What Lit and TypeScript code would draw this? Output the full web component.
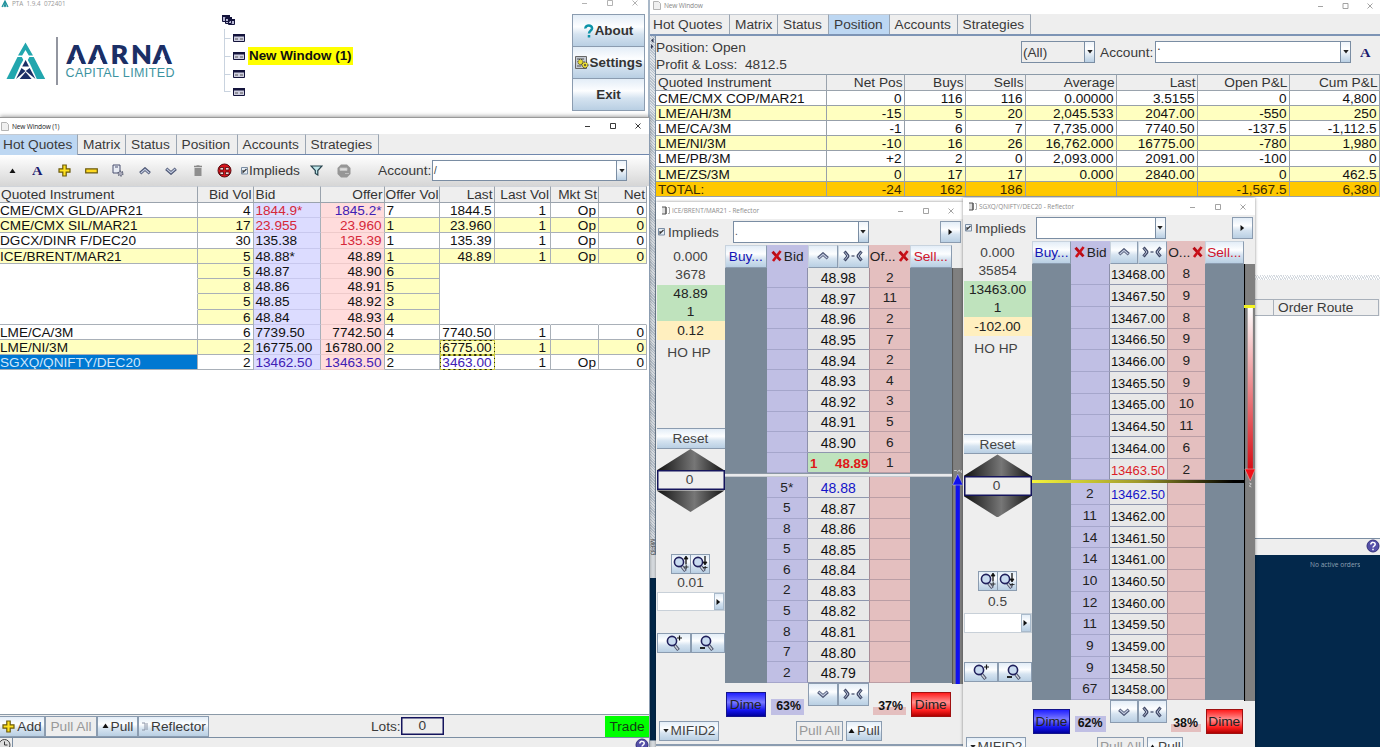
import { LitElement, html, svg, css, nothing } from "lit";
import { customElement, property } from "lit/decorators.js";
import { classMap } from "lit/directives/class-map.js";
import { styleMap } from "lit/directives/style-map.js";

const shared = css`
  * { box-sizing: border-box; }
  svg { display: block; flex: none; }
  .btn {
    display: flex; align-items: center; justify-content: center; flex: none;
    border: 1px solid #8b9cb0; white-space: nowrap; overflow: hidden;
    background: linear-gradient(#e3edf7 0%, #fdfeff 38%, #d5e3f0 62%, #b9cfe3 100%);
  }
  .title {
    display: flex; align-items: center; background: #fff; flex: none;
    font: 6.600px "Open Sans", "Noto Sans", sans-serif; color: #333; white-space: nowrap;
  }
  .title .grow { flex: 1; }
  .combo { display: flex; flex: none; border: 1px solid #7a8da3; background: #fff; }
  .combo .text { flex: 1; padding-left: 1px; }
  .combo .drop {
    width: 10px; display: flex; align-items: center; justify-content: center;
    border-left: 1px solid #7a8da3; background: linear-gradient(#eef4fa, #fff 35%, #b9cfe3);
  }
`;

const down = html`<svg width="6" height="4" viewBox="0 0 6 4"><path d="M.3 0h5.400L3 3.400z" fill="#222"/></svg>`;
const up = html`<svg width="7" height="6" viewBox="0 0 7 6"><path d="M3.500 .5L6.500 5h-6z" fill="#111"/></svg>`;
const right = html`<svg width="5" height="8" viewBox="0 0 5 8"><path d="M.5 1v6L4.200 4z" fill="#111"/></svg>`;
const check = html`<svg width="7" height="8" viewBox="0 0 7 8"><path d="M.5.5h6v6.500h-6z" fill="#e6eef6" stroke="#7a8da3"/><path d="M2 3v2.400L5.500 2" fill="none" stroke="#333" stroke-width="1.100"/></svg>`;
const cross = html`<svg width="11" height="12" viewBox="0 0 11 12"><path d="M1.500 1.800L9.500 10.400" stroke="#b80a14" stroke-width="2.800"/><path d="M9.600 1L2 11" stroke="#cc1018" stroke-width="2.600"/></svg>`;
const chevron = (dir: "up" | "down") => html`<svg width="12" height="8" viewBox="0 0 12 8">
  <g transform=${dir === "up" ? "" : "translate(0 8) scale(1 -1)"}>
    <path d="M1.200 6.200L6 2l4.800 4.200" fill="none" stroke="#4d5775" stroke-width="3.200"/>
    <path d="M1.800 6L6 2.300 10.200 6" fill="none" stroke="#c3cbe0" stroke-width="1.200"/>
  </g></svg>`;
const center = html`<svg width="20" height="12" viewBox="0 0 20 12">
  <path d="M1.500 1.500L5.200 6 1.500 10.500M18.500 1.500L14.800 6l3.700 4.500" fill="none" stroke="#3d4664" stroke-width="3" stroke-linejoin="bevel"/>
  <path d="M2 2.300L5 6l-3 3.700M18 2.300L15 6l3 3.700" fill="none" stroke="#c3cbe0" stroke-width="1"/>
  <path d="M8.500 6h3" stroke="#3d4664" stroke-width="1.200"/></svg>`;
const magnifier = (mark: string) => html`<svg width="18" height="18" viewBox="0 0 18 18">
  <path d="M9.500 11l4 5" stroke="#4a5068" stroke-width="3.400"/><path d="M9.800 11.500l3.200 4" stroke="#d0d4dc" stroke-width="1.300"/>
  <circle cx="7" cy="7" r="4.600" fill="#c9dbf0" stroke="#20205c" stroke-width="1.600"/>
  ${mark === "+" ? svg`<path d="M14.500 1.500v5M12 4h5" stroke="#111" stroke-width="1.200"/>` : nothing}
  ${mark === "-" ? svg`<path d="M1 14h5" stroke="#111" stroke-width="1.800"/>` : nothing}
  ${mark === "u" ? svg`<path d="M14 2.500v7" stroke="#111" stroke-width="1.300"/><path d="M12 4L14 1l2 3zM12 12h4.500M14.200 10v4" fill="#111" stroke="#111" stroke-width=".8"/>` : nothing}
  ${mark === "d" ? svg`<path d="M14 1v7" stroke="#111" stroke-width="1.300"/><path d="M12 7L14 10l2-3zM12 12.500h4.500M14.200 11v3" fill="#111" stroke="#111" stroke-width=".8"/>` : nothing}
</svg>`;
const help = html`<svg width="14" height="14" viewBox="0 0 14 14"><circle cx="7" cy="7" r="6" fill="#5550a8" stroke="#33307c"/>
  <path d="M4.800 5.400C4.800 2.600 9.400 2.800 9.200 5.400C9.100 6.900 7 6.700 7 8.600M7 9.800v1.500" fill="none" stroke="#fff" stroke-width="1.500"/></svg>`;
const page = html`<svg width="8" height="9" viewBox="0 0 8 9"><path d="M.5.5h5l2 2v6h-7z" fill="#f0f0f0" stroke="#b4b4b4"/></svg>`;
const plus = html`<svg width="13" height="13" viewBox="0 0 13 13"><path d="M4.800 1h3.400v3.800H12v3.400H8.200V12H4.800V8.200H1V4.800h3.800z" fill="#ffe21f" stroke="#6b5a0c" stroke-width="1.200"/></svg>`;
const letterA = html`<svg width="12" height="15" viewBox="0 0 12 15"><text x="0" y="12" font-family="Liberation Serif, serif" font-weight="bold" font-size="13.500" textLength="10.500" lengthAdjust="spacingAndGlyphs" fill="#1a1a6e">A</text></svg>`;
const winButtons = (c: string, gap: number) => html`<svg width=${gap * 2 + 8} height="10" viewBox="0 0 ${gap * 2 + 8} 10" fill="none" stroke=${c}>
  <path d="M1 5.500h5M${gap + 1.500} 2.500h5v5h-5zM${gap * 2 + 1.500} 2.500l5 5M${gap * 2 + 6.500} 2.500l-5 5" stroke-width=".9"/></svg>`;
const ladderIcon = html`<svg width="9" height="9" viewBox="0 0 9 9"><path d="M1 1h4v7H1M5 1v7" fill="#ddd" stroke="#555"/><path d="M7 1.500h1.500v6H7" fill="none" stroke="#aaa"/></svg>`;

interface Ladder {
  title: string; cols: string; rowHeight: number; firstLow: number;
  stats: string[]; tick: string; ticks: [string, string][]; lows: [string, string][];
  offerLabel: string; buyPct: string; sellPct: string; gaps: number[];
  combo: number[]; priceSize: number; kind: "blue" | "red"; split: number;
}

@customElement("reflector-window")
export class ReflectorWindow extends LitElement {
  @property({ attribute: false }) data!: Ladder;

  static styles = [shared, css`
    :host { display: block; height: 549px; background: #eee; overflow: hidden; font: 13.700px "Liberation Sans", Arial, sans-serif; color: #444; box-shadow: 0 0 3px rgba(0,0,0,.45); }
    .title { height: 17px; padding: 0 8px 0 5px; gap: 2px; color: #8c8c8c; font-size: 6.400px; }
    .toolbar { display: flex; height: 25.500px; padding: 2px 2px 2px 2px; align-items: flex-start; }
    .check { display: flex; align-items: center; gap: 3px; height: 22px; font-size: 13.700px; }
    .combo { height: 21.500px; line-height: 19px; font-size: 10px; }
    .spacer { flex: 1; }
    .play { width: 21px; height: 22px; }
    .main { display: flex; height: 439px; }
    .side { width: 69px; padding: 3px .5px 0; flex: none; text-align: center; font-size: 13.700px; }
    .line { line-height: 18.500px; height: 18.500px; }
    .green { background: #bfe3bd; color: #222; line-height: 18.200px; height: 18.200px; }
    .yellow { background: #ffefbf; color: #222; line-height: 19.600px; height: 19.600px; }
    .ho { line-height: 25px; height: 24px; padding-right: 3px; }
    .reset { height: 20.500px; border-left: 0; border-right: 0; }
    .tri { height: 21.500px; background: linear-gradient(90deg, #111, #777 55%, #111); }
    .tri.up { clip-path: polygon(50% 0, 100% 100%, 0 100%); }
    .tri.down { clip-path: polygon(0 0, 100% 0, 50% 100%); }
    .box { height: 20px; box-shadow: inset 0 0 0 1.500px #14145c; background: #eee; line-height: 20px; padding-right: 2px; }
    .zooms { display: flex; justify-content: center; padding-right: 1px; }
    .zooms .btn { width: 20px; height: 20px; margin-right: -1px; }
    .tickbox { display: flex; height: 19.500px; border: 1px solid #c8d0d8; background: #fff; }
    .tickbox span { flex: 1; }
    .tickbox .btn { width: 10px; border-color: #a9bacb; }
    .pm { display: flex; height: 20px; }
    .pm .btn { flex: 1; }
    .ladder { flex: none; }
    .grid { display: grid; }
    .head { height: 23px; }
    .head > * { display: flex; align-items: center; justify-content: center; gap: 2px; overflow: hidden; white-space: nowrap; }
    .head .btn { border-top-color: #c8d3de; border-left-color: #c8d3de; }
    .head .pair { gap: 0; }
    .bidhead { background: #c0bfe4; color: #222; }
    .offhead { background: #e4bfbf; color: #222; }
    .buy { color: #1414b4; }
    .sell { color: #d0142c; }
    .pair { display: flex; }
    .pair .btn { flex: 1; height: 100%; }
    .slate { background: #7a8998; }
    .bid, .off, .price { display: flex; align-items: center; justify-content: center; color: #222; border-bottom: 1px solid #8f97ae; }
    .bid { background: #c0bfe4; border-bottom-color: #a5a6cb; border-right: 1px solid #8d90ab; }
    .off { background: #e4bfbf; border-bottom-color: #bb9ea5; border-left: 1px solid #a78c96; }
    .price { background: #e8e8e8; color: #111; padding-top: 2px; }
    .price.last { background: #bfe3bd; color: #e01818; font-weight: bold; justify-content: space-between; padding: 1px 0 0 2px; font-size: 13.400px; }
    .price.ask { color: #dc1e28; }
    .price.best { color: #1414c8; }
    .split.blue { height: 4px; background: #e9eaec; border-top: 1px solid #8a96a2; border-bottom: 1px solid #c5cad0; }
    .split.red { height: 3px; background: linear-gradient(90deg, #f4f43c, #a09a2a 50%, #000 95%); }
    .foot { height: 37px; align-items: start; }
    .dime { height: 25px; margin: 9px 1px 0; display: flex; align-items: center; justify-content: center; color: #222; }
    .dime.b { background: linear-gradient(#2020ff, #7a7aff 40%, #1414ee 75%, #00009c); border: 1px solid #14148c; }
    .dime.r { background: linear-gradient(#ff1c1c, #ff9090 40%, #ff2020 75%, #b00000); border: 1px solid #a01010; }
    .pct { margin: 16px 4px 0; height: 16px; line-height: 15px; font-weight: bold; font-size: 12.400px; color: #111; text-align: right; padding-right: 3px; background: #c0bfe4; white-space: nowrap; }
    .pct.s { background: linear-gradient(transparent 8px, #e4bfbf 8px); }
    .foot .pair { height: 23px; }
    .strip { flex: 1; padding-top: 23px; }
    .strip svg { width: 100%; }
    .actions { display: flex; height: 20.500px; padding: 0 0 0 3px; gap: 3px; font-size: 13.700px; }
    .actions .btn { gap: 2px; }
    .off-btn { color: #999; background: #eee; }
    .status { margin-top: 3px; border-top: 2px solid #8b9cb0; height: 12px; }
  `];

  render() {
    const d = this.data;
    const cols = styleMap({ gridTemplateColumns: d.cols });
    const rows = (n: number, h: number) => styleMap({ gridTemplateColumns: d.cols, gridAutoRows: `${h}px`, fontSize: `${n}px` });
    const row = (price: string, bid: string, off: string, kind: string) => html`
      <div class="slate"></div><div class="bid">${bid}</div>
      <div class=${"price " + kind} style=${styleMap({ fontSize: kind === "last" ? "" : d.priceSize + "px" })}>${kind === "last" ? html`<span>1</span>` : nothing}<span>${price}</span></div>
      <div class="off">${off}</div><div class="slate"></div>`;
    const gap = (h: number) => html`<div style=${styleMap({ height: h + "px" })}></div>`;
    return html`
      <div class="title">${ladderIcon}<span>${d.title} - Reflector</span><span class="grow"></span>${winButtons("#999", 25)}</div>
      <div class="toolbar">
        <div class="check">${check}<span>Implieds</span></div>
        <div class="combo" style=${styleMap({ width: d.combo[1] + "px", marginLeft: d.combo[0] + "px" })}><span class="text">${d.kind === "blue" ? "." : ""}</span><span class="drop">${down}</span></div>
        <span class="spacer"></span><div class="btn play">${right}</div>
      </div>
      <div class="main">
        <div class="side">
          <div class="line">0.000</div><div class="line">${d.stats[0]}</div>
          <div class="green">${d.stats[1]}</div><div class="green">1</div>
          <div class="yellow">${d.stats[2]}</div><div class="ho">HO HP</div>
          ${gap(d.gaps[0])}
          <div class="btn reset">Reset</div><div class="tri up"></div><div class="box">0</div><div class="tri down"></div>
          ${gap(d.gaps[1])}
          <div class="zooms"><div class="btn">${magnifier("u")}</div><div class="btn">${magnifier("d")}</div></div>
          <div style=${styleMap({ lineHeight: d.gaps[2] + "px" })}>${d.tick}</div>
          <div class="tickbox"><span></span><div class="btn">${right}</div></div>
          ${gap(d.gaps[3])}
          <div class="pm"><div class="btn">${magnifier("+")}</div><div class="btn">${magnifier("-")}</div></div>
        </div>
        <div class="ladder">
          <div class="grid head" style=${cols}>
            <div class="btn buy">Buy...</div><div class="bidhead">${cross}Bid</div>
            <div class="pair"><div class="btn">${chevron("up")}</div><div class="btn">${center}</div></div>
            <div class="offhead">${d.offerLabel}${cross}</div><div class="btn sell">Sell...</div>
          </div>
          <div class="grid" style=${rows(13.700, d.rowHeight)}>
            ${d.ticks.map(([p, q], i) => row(p, "", q, i === d.ticks.length - 1 ? (d.kind === "blue" ? "last" : "ask") : ""))}
          </div>
          <div class=${"split " + d.kind}></div>
          <div class="grid" style=${rows(13.700, d.firstLow)}>
            ${d.lows.map(([p, q], i) => row(p, q, "", i === 0 ? "best" : ""))}
          </div>
          <div class="grid foot" style=${cols}>
            <div class="dime b">Dime</div><div class="pct">${d.buyPct}</div>
            <div class="pair"><div class="btn">${chevron("down")}</div><div class="btn">${center}</div></div>
            <div class="pct s">${d.sellPct}</div><div class="dime r">Dime</div>
          </div>
        </div>
        <div class="strip">
          ${d.kind === "blue"
            ? html`<svg height="416" viewBox="0 0 11 416" preserveAspectRatio="none"><path d="M0 0h11v416H0z" fill="#808080"/><path d="M.5 0v416" stroke="#555"/><path d="M2 202.500h2.500M5 204l2-2 1 2M9 202v3" stroke="#ddd" stroke-width=".8" fill="none"/><path d="M5.500 216v200" stroke="#1010ee" stroke-width="4"/><path d="M5.500 206l5 11h-10z" fill="#1010ee" stroke="#cfd0e8" stroke-width=".5"/></svg>`
            : html`<svg height="437" viewBox="0 0 11 437" preserveAspectRatio="none"><defs><linearGradient id="g" x2="0" y2="1"><stop stop-color="#fff"/><stop offset="1" stop-color="#d80c14"/></linearGradient></defs>
              <path d="M0 0h11v437H0z" fill="#808080"/><path d="M.5 0v437" stroke="#000"/><path d="M3.500 44h5v162h-5z" fill="url(#g)"/><path d="M0 41h11v3H0z" fill="#f4f420"/><path d="M.8 205h10L6 217z" fill="#f01018" stroke="#e8c8c8" stroke-width=".5"/><path d="M5 219l2 1-2 2 2 1" fill="none" stroke="#ddd" stroke-width=".8"/></svg>`}
        </div>
      </div>
      ${gap(d.split)}
      <div class="actions">
        <div class="btn" style="width:60px">${down}MIFID2</div>
        <div style=${styleMap({ width: d.gaps[4] + "px" })}></div>
        <div class="btn off-btn" style="width:47px">Pull All</div><div class="btn" style="width:36px">${up}Pull</div>
      </div>
      <div class="status"></div>`;
  }
}

const brent: Ladder = {
  title: "ICE/BRENT/MAR21", cols: "41.500px 41.500px 60.500px 41.500px 41.500px", rowHeight: 20.600, firstLow: 20.550,
  stats: ["3678", "48.89", "0.12"], tick: "0.01",
  ticks: [["48.98", "2"], ["48.97", "11"], ["48.96", "2"], ["48.95", "7"], ["48.94", "2"], ["48.93", "4"], ["48.92", "3"], ["48.91", "5"], ["48.90", "6"], ["48.89", "1"]],
  lows: [["48.88", "5*"], ["48.87", "5"], ["48.86", "8"], ["48.85", "5"], ["48.84", "6"], ["48.83", "2"], ["48.82", "5"], ["48.81", "8"], ["48.80", "7"], ["48.79", "2"]],
  offerLabel: "Of...", buyPct: "63%", sellPct: "37%", gaps: [64, 42, 18, 22, 71], combo: [14, 136], priceSize: 14, kind: "blue", split: 37,
};
const nifty: Ladder = {
  title: "SGXQ/QNIFTY/DEC20", cols: "39px 38.500px 57px 38.500px 38.500px", rowHeight: 21.700, firstLow: 21.700,
  stats: ["35854", "13463.00", "-102.00"], tick: "0.5",
  ticks: [["13468.00", "8"], ["13467.50", "9"], ["13467.00", "8"], ["13466.50", "9"], ["13466.00", "9"], ["13465.50", "9"], ["13465.00", "10"], ["13464.50", "11"], ["13464.00", "6"], ["13463.50", "2"]],
  lows: [["13462.50", "2"], ["13462.00", "11"], ["13461.50", "14"], ["13461.00", "14"], ["13460.50", "10"], ["13460.00", "12"], ["13459.50", "11"], ["13459.00", "9"], ["13458.50", "9"], ["13458.00", "67"]],
  offerLabel: "O...", buyPct: "62%", sellPct: "38%", gaps: [73.500, 54, 22, 29, 65], combo: [10, 130], priceSize: 13, kind: "red", split: 57,
};

type Quote = [string, string, string, string, string, string, string, string, string, string];
// instrument, bid vol, bid, offer, offer vol, last, last vol, status, net, flags
const quotes: Quote[] = [
  ["CME/CMX GLD/APR21", "4", "1844.9*", "1845.2*", "7", "1844.5", "1", "Op", "0", "bidred offblue"],
  ["CME/CMX SIL/MAR21", "17", "23.955", "23.960", "1", "23.960", "1", "Op", "0", "odd bidred offred"],
  ["DGCX/DINR F/DEC20", "30", "135.38", "135.39", "1", "135.39", "1", "Op", "0", "offred"],
  ["ICE/BRENT/MAR21", "5", "48.88*", "48.89", "1", "48.89", "1", "Op", "0", "odd"],
  ["", "5", "48.87", "48.90", "6", "", "", "", "", "depth"],
  ["", "8", "48.86", "48.91", "5", "", "", "", "", "depth"],
  ["", "5", "48.85", "48.92", "3", "", "", "", "", "depth"],
  ["", "6", "48.84", "48.93", "4", "", "", "", "", "depth end"],
  ["LME/CA/3M", "6", "7739.50", "7742.50", "4", "7740.50", "1", "", "0", ""],
  ["LME/NI/3M", "2", "16775.00", "16780.00", "2", "6775.00", "1", "", "0", "odd flash"],
  ["SGXQ/QNIFTY/DEC20", "2", "13462.50", "13463.50", "2", "3463.00", "1", "Op", "0", "sel bidblue offblue flash lastblue"],
];
const positions = [
  ["CME/CMX COP/MAR21", "0", "116", "116", "0.00000", "3.5155", "0", "4,800"],
  ["LME/AH/3M", "-15", "5", "20", "2,045.533", "2047.00", "-550", "250"],
  ["LME/CA/3M", "-1", "6", "7", "7,735.000", "7740.50", "-137.5", "-1,112.5"],
  ["LME/NI/3M", "-10", "16", "26", "16,762.000", "16775.00", "-780", "1,980"],
  ["LME/PB/3M", "+2", "2", "0", "2,093.000", "2091.00", "-100", "0"],
  ["LME/ZS/3M", "0", "17", "17", "0.000", "2840.00", "0", "462.5"],
  ["TOTAL:", "-24", "162", "186", "", "", "-1,567.5", "6,380"],
];
const tabNames = ["Hot Quotes", "Matrix", "Status", "Position", "Accounts", "Strategies"];

@customElement("app-root")
export class AppRoot extends LitElement {
  static styles = [shared, css`
    :host { display: block; position: relative; width: 1380px; height: 747px; overflow: hidden; background: #03284b; font: 13.600px "Liberation Sans", Arial, sans-serif; color: #3a3a3a; }
    .win { position: absolute; overflow: hidden; }
    .main { left: 0; top: 0; width: 650px; height: 118px; background: #fff; display: flex; border-right: 2px solid #a9b8c8; }
    .main .left { display: flex; flex-direction: column; width: 222px; flex: none; }
    .main .title { height: 7px; padding-left: 1px; gap: 3px; color: #999; font-size: 6.300px; }
    .logo { margin: 24px 0 0 4px; }
    .tree { display: flex; margin-top: 14px; width: 350px; flex: none; }
    .nodes { display: flex; flex-direction: column; margin: 15px 0 0 -16px; }
    .node { display: flex; align-items: center; height: 18px; gap: 3px; }
    .node b { background: #ff0; color: #111; font-size: 13.400px; line-height: 18px; padding: 0 1px; white-space: nowrap; }
    .menu { display: flex; flex-direction: column; width: 73px; }
    .menu .wb { height: 16px; padding: 0 0 0 9px; margin-top: -2px; }
    .menu .btn { height: 33px; margin-bottom: -1px; font-weight: bold; font-size: 13.400px; gap: 1px; color: #333; }

    .quotes { left: 0; top: 117px; width: 650px; height: 640px; background: #fff; border-top: 1px solid #999; border-right: 1px solid #8b9cb0; display: flex; flex-direction: column; box-shadow: 0 -1px 4px rgba(0,0,0,.35); }
    .quotes .title { height: 16px; padding: 0 7px 0 1px; gap: 3px; letter-spacing: -.18px; }
    .tabs { display: flex; background: #eee; height: 21px; border-bottom: 1px solid #6f87ad; flex: none; }
    .tab { border-right: 1px solid #9aa5b2; white-space: nowrap; overflow: hidden; border-top: 1px solid #c4cad2; padding-left: 5px; font-size: 13.700px; height: 20px; line-height: 20px; }
    .tab.on { background: #bdd7f2; height: 21px; }
    .tools { display: flex; align-items: center; height: 31px; background: linear-gradient(#fff, #d6d6d6); flex: none; }
    .tool { width: 26.700px; display: flex; justify-content: center; flex: none; }
    .chk { display: flex; align-items: center; gap: 1px; width: 61px; font-size: 13.700px; flex: none; }
    .tools .combo { width: 195px; height: 21px; font-size: 10px; line-height: 19px; }
    .qt { display: grid; grid-template-columns: 197.500px 56px 67px 64px 55.500px 54.500px 56.500px 48px 48px; flex: none; }
    .qt.h { height: 17px; font-size: 13.700px; }
    .qt.h > div, .ph > div { background: #eee; color: #333; border-right: 1px solid #9aa3ad; border-bottom: 1px solid #9aa3ad; border-top: 1px solid #d0d4da; overflow: hidden; white-space: nowrap; line-height: 16px; padding: 0 1px; }
    .cell { line-height: 15px; height: 15.230px; color: #111; background: #fff; border-right: 1px solid #a9b0b8; border-bottom: 1px solid #a9b0b8; overflow: hidden; white-space: nowrap; padding: 0 1px 0 0; }
    .r { text-align: right; }
    .cell.r { padding-right: 2px; }
    .odd .cell, .depth .y { background: #ffffc0; }
    .qt .bid { background: #dcdcff; border-bottom-color: #c8c8ee; padding-left: 2px; }
    .qt .off { background: #ffdcdc; border-bottom-color: #eecaca; }
    .cell.offv { padding-left: 2px; }
    .bidred .bid, .offred .off { color: #d62839; }
    .bidblue .bid, .offblue .off, .lastblue .last { color: #4020b4; }
    .depth .n { border-right-color: transparent; border-bottom-color: transparent; }
    .depth .inst { border-right-color: #a9b0b8; }
    .end .n { border-bottom-color: #a9b0b8; }
    .sel .inst { background: #0078d2; color: #cfe6fb; }
    .flash .last { border: 1px solid #2a2a10; outline: 1px dashed #c8c840; outline-offset: -1px; line-height: 13px; }
    .fill { flex: 1; }
    .bar { display: flex; height: 23px; background: #eee; border-top: 1px solid #8b9aa8; align-items: center; font-size: 13.700px; flex: none; }
    .bar .btn { height: 21px; gap: 2px; }
    .bar .gray { color: #999; background: #eee; }
    .lots { width: 43px; height: 18px; box-shadow: inset 0 0 0 1.500px #14145c; text-align: center; line-height: 18px; }
    .trade { margin-left: auto; width: 44px; height: 21px; background: #0f0; line-height: 21px; text-align: center; color: #143c14; }
    .stat { display: flex; justify-content: space-between; height: 20px; background: #eee; border-top: 1px solid #7b8ea3; flex: none; }

    .pos { left: 650px; top: 0; width: 730px; height: 555px; background: #eee; display: flex; flex-direction: column; }
    .pos .title { height: 14px; padding: 0 6px 3px 3px; gap: 3px; color: #888; letter-spacing: -.18px; }
    .pos .tabs { border-bottom: 2px solid #7d94b5; height: 22px; }
    .pos .tab.on { height: 20px; }
    .split { display: flex; flex: 1; min-height: 0; }
    .splitter { width: 6px; flex: none; background: repeating-linear-gradient(45deg, #dfe3e8 0 1px, #b8c2cd 1px 2px); border-right: 1px solid #7b8ea3; }
    .pane { flex: 1; display: flex; flex-direction: column; min-width: 0; }
    .info { display: flex; height: 38px; }
    .info .sum { width: 365px; line-height: 17px; padding-top: 3px; font-size: 13.700px; white-space: pre; }
    .info .combo { height: 22px; margin-top: 5px; line-height: 21px; }
    .info .lbl { line-height: 33px; width: 55px; margin-left: 5px; font-size: 13.700px; }
    .ph, .pr { display: grid; grid-template-columns: 170.500px 78px 61px 60px 91px 81px 92px 90px; flex: none; }
    .ph > div { height: 16.500px; border-top: 1px solid #8b9aa8; font-size: 13.700px; }
    .pr .cell { border-color: #97a0aa; padding-right: 2px; }
    .pr .cell:first-child, .ph > div:first-child { padding-left: 2px; }
    .pr.total .cell { background: #ffc800; color: #3a2800; }
    .blank { height: 78px; background: #fff; }
    .hsplit { height: 5px; background: repeating-linear-gradient(60deg, #fff 0 1px, #d5dae0 1px 2px); }
    .orders { height: 19px; }
    .oh { display: flex; height: 17px; border: 1px solid #a8b0ba; margin-right: 1px; }
    .oh span:last-child { border-left: 1px solid #a8b0ba; padding-left: 4px; line-height: 16px; width: 105px; font-size: 13.700px; }
    .oh span:first-child { flex: 1; }
    .pos .stat { height: 17px; }
    .stub { left: 650px; top: 555px; width: 6px; height: 23px; background: #dde1e5; }
    .stub2 { left: 650px; top: 740px; width: 6px; height: 7px; background: #dde1e5; border-top: 1px solid #7b8ea3; }
    .side-label { left: 650px; top: 539px; font-size: 6px; writing-mode: vertical-rl; color: #444; height: 18px; width: 6px; line-height: 6px; }
    .note { left: 1310px; top: 559px; font: 6.600px "Open Sans", sans-serif; line-height: 12px; color: #8fa1b3; white-space: nowrap; }
    .r1 { left: 656px; top: 202px; width: 307px; }
    .r2 { left: 963px; top: 198px; width: 292px; }
  `];

  private tabs(active: string, widths: number[]) {
    return html`<div class="tabs">${tabNames.map((t, i) => html`<div class=${classMap({ tab: true, on: t === active })}
      style=${styleMap({ width: widths[i] + "px", paddingLeft: i ? "5px" : "3px" })}>${t}</div>`)}</div>`;
  }

  private quote(q: Quote) {
    return html`<div class=${"qt " + q[9]}>
      <div class="cell inst n">${q[0]}</div><div class="cell r y">${q[1]}</div><div class="cell bid">${q[2]}</div>
      <div class="cell off r">${q[3]}</div><div class="cell offv y">${q[4]}</div><div class="cell last r n">${q[5]}</div>
      <div class="cell r n" style="padding-right:4px">${q[6]}</div><div class="cell r n">${q[7]}</div><div class="cell r n">${q[8]}</div></div>`;
  }

  render() {
    const node = html`<svg width="12" height="8" viewBox="0 0 12 8"><path d="M.5.5h11v7H.5z" fill="#cfcfe0" stroke="#14143c"/><path d="M0 0h12v2.500H0z" fill="#14143c"/><path d="M2 5h3M7 5h3" stroke="#555"/></svg>`;
    return html`
      <div class="win main">
        <div class="left">
          <div class="title"><svg width="8" height="8" viewBox="0 0 8 8"><path d="M1 7l3-6 3 6M3 7l1-3 1 3" fill="none" stroke="#1b8f9a" stroke-width="1.200"/></svg>PTA&nbsp; 1.9.4&nbsp; 072401</div>
          <svg class="logo" width="175" height="60" viewBox="4 31 175 60">
            <g fill="#22a6ae"><path d="M25.500 42.500L33 55.500h-4.200l-3.300-5.500-3.300 5.500H18z"/><path d="M17.500 57h4.300l3.300 6-7.800 16H6.500zM33.700 57h-4.300l-3.300 6 7.800 16h11.300z"/></g>
            <path d="M25.500 56l-4.800 8.500L14 79.500h23L30.300 64.500z" fill="#fff"/>
            <path d="M25.600 60l-3.400 6.500h6.800zM21.500 68l4 3-9.500 8zM29.700 68l-4 3 9.800 8zM25.600 72l-6 7h12z" fill="#1b2f66"/>
            <path d="M57 37v48" stroke="#4a4f60" stroke-width="1.200"/>
            <text x="66.500 88 110.500 131 152.500" y="64.300" font-family="Lato, sans-serif" font-weight="800" font-size="27" fill="#1b2f66">AARNA</text>
            <path d="M71.500 65L76.700 52.500 81.900 65zM93 65L98.200 52.500 103.400 65zM157.500 65L162.700 52.500 167.900 65z" fill="#fff"/>
            <text x="65.500" y="77.300" font-family="Liberation Sans, sans-serif" font-size="12.500" textLength="109" lengthAdjust="spacing" fill="#3c93a0">CAPITAL LIMITED</text>
          </svg>
        </div>
        <div class="tree">
          <svg width="27" height="80" viewBox="0 0 27 80"><g stroke="#14143c" fill="#b8b8d4"><path d="M.5 2.500h7v5h-7zM3.500 3.500h6v6h-6zM6.500 5.500h6v5h-6z"/></g><path d="M0 2h8M4 4h6M6 6h7" stroke="#14143c" stroke-width="2"/><path d="M2.500 15v63M2.500 24.500h6M2.500 42.500h6M2.500 60.500h6M2.500 77.500h6" stroke="#c9d3df" fill="none"/></svg>
          <div class="nodes"><div class="node">${node}</div><div class="node">${node}<b>New Window (1)</b></div><div class="node">${node}</div><div class="node">${node}</div></div>
        </div>
        <div class="menu">
          <div class="wb">${winButtons("#aaa", 25)}</div>
          <div class="btn"><svg width="10" height="14" viewBox="0 0 10 14"><path d="M1.500 4.500C1 .5 8.500.5 8 4.500C7.600 6.800 5.300 6.500 5 9.500M5 11v2.500" fill="none" stroke="#0d93a8" stroke-width="2.500"/></svg>About</div>
          <div class="btn"><svg width="14" height="14" viewBox="0 0 14 14"><path d="M.5.5h11v12H.5z" fill="#c4cad2" stroke="#666"/><path d="M2 3h7M2 10h4" stroke="#555"/><circle cx="5.500" cy="6" r="2.600" fill="#e9dc32" stroke="#333" stroke-dasharray="1.500 1"/><circle cx="10" cy="9" r="3" fill="#e9dc32" stroke="#333" stroke-dasharray="1.500 1"/><circle cx="10" cy="9" r="1" fill="#444"/></svg>Settings</div>
          <div class="btn">Exit</div>
        </div>
      </div>

      <div class="win pos">
        <div class="title">${page}<span>New Window</span><span class="grow"></span>${winButtons("#999", 24.500)}</div>
        ${this.tabs("Position", [80, 48, 51, 60.500, 68, 73])}
        <div class="split">
          <div class="splitter"><svg width="5" height="14" viewBox="0 0 5 14"><path d="M3.500 2v5L1 4.500zM1 8v5l2.500-2.500z" fill="#333a55"/></svg></div>
          <div class="pane">
            <div class="info">
              <div class="sum">Position: Open
Profit &amp; Loss:  4812.5</div>
              <div class="combo" style="width:74px;background:#eee"><span class="text">(All)</span><span class="drop">${down}</span></div>
              <span class="lbl">Account:</span>
              <div class="combo" style="width:196px"><span class="text" style="line-height:8px">.</span><span class="drop">${down}</span></div>
              <div style="margin:9px 0 0 9px">${letterA}</div>
            </div>
            <div class="ph">${["Quoted Instrument", "Net Pos", "Buys", "Sells", "Average", "Last", "Open P&L", "Cum P&L"].map((t, i) => html`<div class=${i ? "r" : ""}>${t}</div>`)}</div>
            ${positions.map((p, n) => html`<div class=${classMap({ pr: true, odd: n % 2 === 1, total: n === 6 })}>${p.map((t, i) => html`<div class=${i ? "cell r" : "cell"}>${t}</div>`)}</div>`)}
            <div class="blank"></div><div class="hsplit"></div><div class="orders"></div>
            <div class="oh"><span></span><span>Order Route</span></div>
            <div class="fill" style="background:#fff"></div>
            <div class="stat"><span></span>${help}</div>
          </div>
        </div>
      </div>
      <div class="win stub"></div><div class="win stub2"></div>
      <div class="win side-label">MIFID</div>
      <div class="win note">No active orders</div>

      <div class="win quotes">
        <div class="title" style="color:#222">${page}<span>New Window (1)</span><span class="grow"></span>${winButtons("#222", 25)}</div>
        ${this.tabs("Hot Quotes", [78, 48, 50.500, 61, 68, 73])}
        <div class="tools">
          <div class="tool" style="width:24.500px">${up}</div><div class="tool">${letterA}</div><div class="tool">${plus}</div>
          <div class="tool"><svg width="13" height="6" viewBox="0 0 13 6"><path d="M.7.8h11.600v4H.7z" fill="#ffd91f" stroke="#6b5a0c" stroke-width="1.200"/></svg></div>
          <div class="tool"><svg width="12" height="13" viewBox="0 0 12 13"><path d="M1 1h7v8H1zM3 3h3" fill="#e8ecf4" stroke="#4a5070"/><circle cx="8.500" cy="9.500" r="2.300" fill="#aab" stroke="#555b70" stroke-width="1.500" stroke-dasharray="1.200 1"/></svg></div>
          <div class="tool">${chevron("up")}</div><div class="tool">${chevron("down")}</div>
          <div class="tool"><svg width="10" height="11" viewBox="0 0 10 11"><path d="M1 1.500h8M3.500 1h3" stroke="#888" stroke-width="1.500"/><path d="M1.500 3h7v8h-7z" fill="#8e8e8e"/></svg></div>
          <div class="tool"><svg width="15" height="15" viewBox="0 0 15 15"><circle cx="7.500" cy="7.500" r="6.500" fill="#d8141c" stroke="#5c0a0e"/><path d="M3 4.500h3.500v2.500H3zM8.500 4.500H12v2.500H8.500zM3 9h3.500v2.500H3zM8.500 9H12v2.500H8.500z" fill="#f4d8d8" stroke="#300" stroke-width=".7"/></svg></div>
          <div class="chk" style="margin-left:3px">${check}Implieds</div>
          <div class="tool" style="width:28px"><svg width="13" height="11" viewBox="0 0 13 11"><path d="M1 1h11L7.800 5.500V10L5.300 8.500v-3z" fill="#bfe6ea" stroke="#24424c" stroke-width="1.200"/></svg></div>
          <div class="tool" style="width:27px"><svg width="14" height="14" viewBox="0 0 14 14"><path d="M4 .5h6l3.500 3.500v6L10 13.500H4L.5 10V4z" fill="#969696"/><path d="M3 4h7v2.500H3zM8 9.500h4" fill="#ddd" stroke="#c8c8c8" stroke-width=".8"/></svg></div>
          <span style="margin-left:21px;width:54px;font-size:13.700px">Account:</span>
          <div class="combo"><span class="text">/</span><span class="drop">${down}</span></div>
        </div>
        <div class="qt h"><div>Quoted Instrument</div><div class="r">Bid Vol</div><div style="padding-left:2px">Bid</div><div class="r">Offer</div><div>Offer Vol</div><div class="r">Last</div><div class="r">Last Vol</div><div class="r">Mkt St</div><div class="r">Net</div></div>
        ${quotes.map((q) => this.quote(q))}
        <div class="fill"></div>
        <div class="bar">
          <div class="btn" style="width:45px;border-left:0">${plus}Add</div><div class="btn gray" style="width:52px">Pull All</div>
          <div class="btn" style="width:41px">${up}Pull</div><div class="btn" style="width:71px"><svg width="8" height="9" viewBox="0 0 8 9"><path d="M1 1h3v7H1M6 1v7" fill="none" stroke="#8a93a5"/></svg>Reflector</div>
          <span style="margin-left:162px">Lots:</span><div class="lots">0</div><div class="trade">Trade</div>
        </div>
        <div class="stat"><svg width="13" height="14" viewBox="0 0 13 14"><circle cx="4.500" cy="7" r="5.500" fill="#ddd" stroke="#444"/><path d="M4.500 3.500V7h3" fill="none" stroke="#333"/><path d="M12.500 0v14" stroke="#7b8ea3"/></svg>${help}</div>
      </div>

      <reflector-window class="win r1" .data=${brent}></reflector-window>
      <reflector-window class="win r2" .data=${nifty}></reflector-window>
    `;
  }
}
